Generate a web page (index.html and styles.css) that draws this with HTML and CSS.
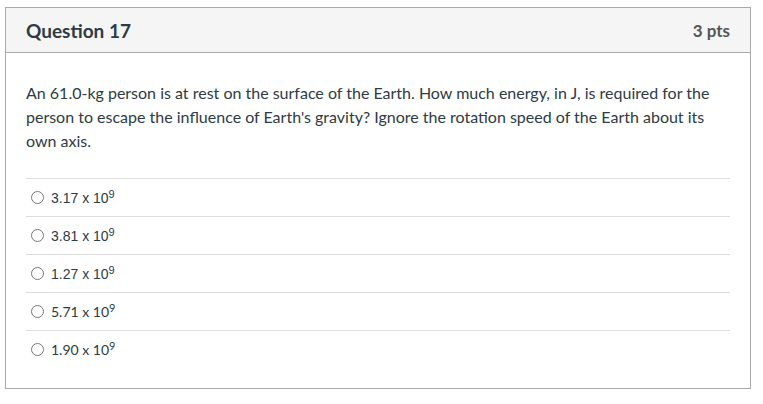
FILE: index.html
```html
<!DOCTYPE html>
<html>
<head>
<meta charset="utf-8">
<link rel="stylesheet" href="styles.css">
</head>
<body>
<div class="page">
  <div class="question">
    <div class="q-header">
      <div class="q-title">Question 17</div>
      <div class="q-pts">3 pts</div>
    </div>
    <div class="q-body">
      <p class="q-text">An 61.0-kg person is at rest on the surface of the Earth. How much energy, in J, is required for the person to escape the influence of Earth's gravity? Ignore the rotation speed of the Earth about its own axis.</p>
      <div class="answers">
        <label class="answer arial"><span class="radio"></span><span class="a-text">3.17 x 10<sup>9</sup></span></label>
        <label class="answer arial"><span class="radio"></span><span class="a-text">3.81 x 10<sup>9</sup></span></label>
        <label class="answer arial"><span class="radio"></span><span class="a-text">1.27 x 10<sup>9</sup></span></label>
        <label class="answer"><span class="radio"></span><span class="a-text">5.71 x 10<sup>9</sup></span></label>
        <label class="answer"><span class="radio"></span><span class="a-text">1.90 x 10<sup>9</sup></span></label>
      </div>
    </div>
  </div>
</div>
</body>
</html>
```
FILE: styles.css
```css
html, body {
  margin: 0;
  padding: 0;
  background: #ffffff;
}
body {
  font-family: Lato, "Liberation Sans", sans-serif;
  color: #2d3b45;
}
.page {
  padding: 7px 0 0 5px;
}
.question {
  width: 746px;
  box-sizing: border-box;
  border: 1px solid #aaaaaa;
}
.q-header {
  display: flex;
  justify-content: space-between;
  align-items: center;
  height: 44px;
  padding: 0 20px;
  background: #f5f5f5;
  border-bottom: 1px solid #aaaaaa;
}
.q-title {
  font-size: 19px;
  font-weight: 700;
  color: #2d3b45;
}
.q-pts {
  font-size: 17px;
  font-weight: 700;
  color: #555555;
}
.q-body {
  padding: 28px 20px 20px 20px;
}
.q-text {
  margin: 0 0 25px 0;
  font-size: 16px;
  line-height: 24px;
}
.answers {
  display: flex;
  flex-direction: column;
}
.answer {
  display: flex;
  align-items: center;
  height: 37px;
  border-top: 1px solid #dddddd;
  padding-left: 5px;
  font-size: 14px;
  color: #2d3b45;
}
.answer.arial {
  font-family: "Liberation Sans", Arial, sans-serif;
}
.radio {
  width: 11px;
  height: 11px;
  border: 1px solid #777777;
  border-radius: 50%;
  margin-right: 7px;
  background: #fff;
}
.a-text sup {
  font-size: 11px;
  line-height: 0;
  vertical-align: 5px;
}
```
